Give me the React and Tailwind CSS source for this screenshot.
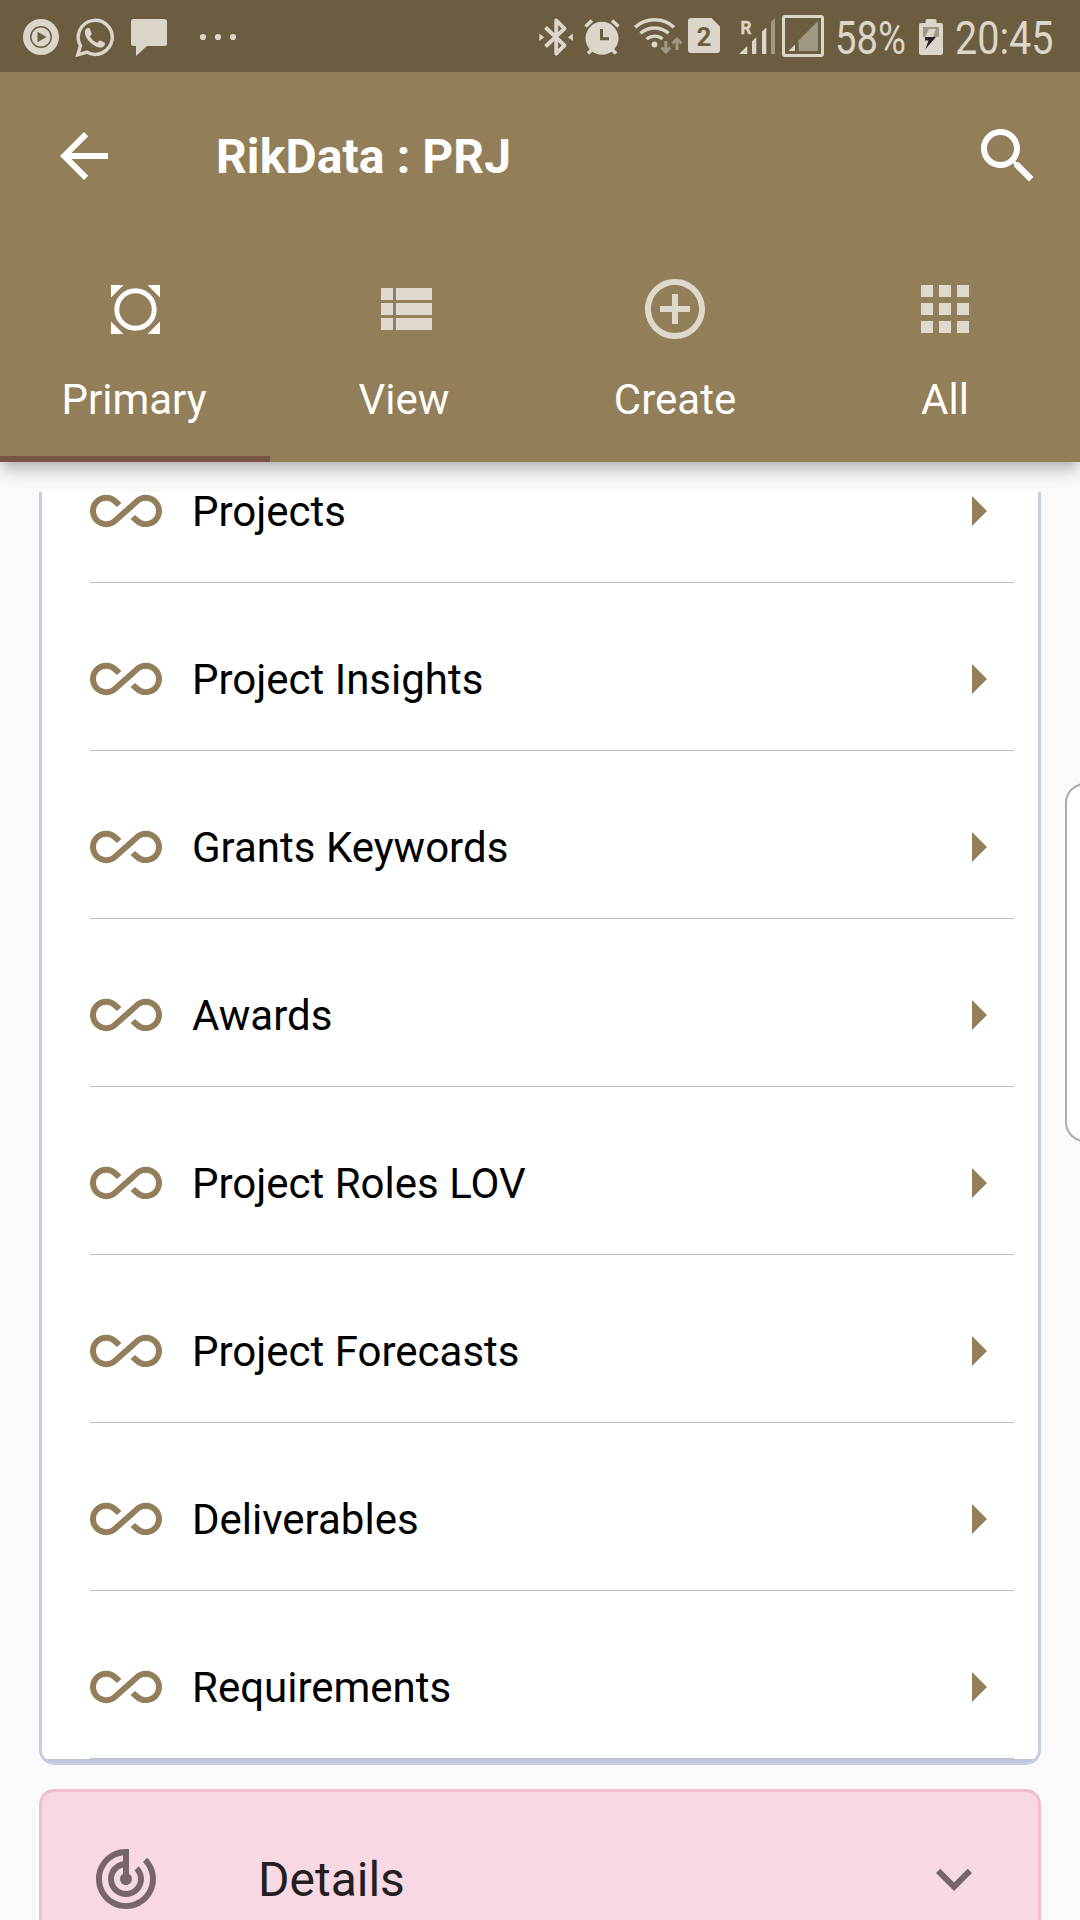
import React from "react";

const PATHS = {
  back: "M20 11H7.83l5.59-5.59L12 4l-8 8 8 8 1.41-1.41L7.83 13H20v-2z",
  search:
    "M15.5 14h-.79l-.28-.27C15.41 12.59 16 11.11 16 9.5 16 5.91 13.09 3 9.5 3S3 5.91 3 9.5 5.91 16 9.5 16c1.61 0 3.09-.59 4.23-1.57l.27.28v.79l5 4.99L20.49 19l-4.99-5zm-6 0C7.01 14 5 11.99 5 9.5S7.01 5 9.5 5 14 7.01 14 9.5 11.99 14 9.5 14z",
  view: "M4 14h4v-4H4v4zm0 5h4v-4H4v4zM4 9h4V5H4v4zm5 5h12v-4H9v4zm0 5h12v-4H9v4zM9 5v4h12V5H9z",
  create:
    "M13 7h-2v4H7v2h4v4h2v-4h4v-2h-4V7zm-1-5C6.48 2 2 6.48 2 12s4.48 10 10 10 10-4.48 10-10S17.52 2 12 2zm0 18c-4.41 0-8-3.59-8-8s3.59-8 8-8 8 3.59 8 8-3.59 8-8 8z",
  all: "M4 8h4V4H4v4zm6 12h4v-4h-4v4zm-6 0h4v-4H4v4zm0-6h4v-4H4v4zm6 0h4v-4h-4v4zm6-10v4h4V4h-4zm-6 4h4V4h-4v4zm6 6h4v-4h-4v4zm0 6h4v-4h-4v4z",
  infinity:
    "M18.6 6.62c-1.44 0-2.8.56-3.77 1.53L12 10.66 10.48 12h.01L7.8 14.39c-.64.64-1.49.99-2.4.99-1.87 0-3.39-1.51-3.39-3.38S3.53 8.62 5.4 8.62c.91 0 1.76.35 2.44 1.03l1.13 1 1.51-1.34L9.22 8.2C8.2 7.18 6.84 6.62 5.4 6.62 2.42 6.62 0 9.04 0 12s2.42 5.38 5.4 5.38c1.44 0 2.8-.56 3.77-1.53l2.83-2.5.01.01L13.52 12h-.01l2.69-2.39c.64-.64 1.49-.99 2.4-.99 1.87 0 3.39 1.51 3.39 3.38s-1.52 3.38-3.39 3.38c-.9 0-1.76-.35-2.44-1.03l-1.14-1.01-1.51 1.34 1.27 1.12c1.02 1.01 2.37 1.57 3.82 1.57 2.98 0 5.4-2.41 5.4-5.38s-2.42-5.37-5.4-5.37z",
  right: "M10 17l5-5-5-5v10z",
  track:
    "M19.07 4.93l-1.41 1.41C19.1 7.79 20 9.79 20 12c0 4.42-3.58 8-8 8s-8-3.58-8-8c0-4.08 3.05-7.44 7-7.93v2.02C8.16 6.57 6 9.03 6 12c0 3.31 2.69 6 6 6s6-2.69 6-6c0-1.66-.67-3.16-1.76-4.24l-1.41 1.41C15.55 9.9 16 10.9 16 12c0 2.21-1.79 4-4 4s-4-1.79-4-4c0-1.86 1.28-3.41 3-3.86v2.14c-.6.35-1 .98-1 1.72 0 1.1.9 2 2 2s2-.9 2-2c0-.74-.4-1.38-1-1.72V2h-1C6.48 2 2 6.48 2 12s4.48 10 10 10 10-4.48 10-10c0-2.76-1.12-5.26-2.93-7.07z",
  down: "M16.59 8.59L12 13.17 7.41 8.59 6 10l6 6 6-6z",
};

function Icon({ name, className = "" }) {
  return (
    <svg viewBox="0 0 24 24" fill="currentColor" className={"h-[72px] w-[72px] shrink-0 " + className}>
      <path d={PATHS[name]} />
    </svg>
  );
}

function PrimaryIcon() {
  return (
    <svg viewBox="0 0 72 72" fill="currentColor" className="h-[72px] w-[72px]">
      <path d="M12 12h12.500L12 24.500zM61 12v12.500L48.500 12zM12 61V48.500L24.500 61zM61 61H48.500L61 48.500z" />
      <circle cx="36.500" cy="36.500" r="18.700" fill="none" stroke="currentColor" strokeWidth="4.900" />
    </svg>
  );
}

function StatusBar() {
  return (
    <div className="flex h-[72px] items-center bg-[#6c5d40] pl-[23px] text-[#dbd5ca]">
      <svg viewBox="23 0 36 72" className="h-[72px] w-[36px]" fill="currentColor">
        <circle cx="41" cy="37" r="18" />
        <circle cx="41" cy="37" r="10.2" fill="none" stroke="#6c5d40" strokeWidth="1.5" />
        <path d="M37.5 31.7v10.6L46.5 37z" fill="#6c5d40" />
      </svg>
      <svg viewBox="75 0 40 72" className="ml-[16px] h-[72px] w-[40px]" fill="currentColor">
        <path
          d="M77.8 54.8l2.7-9A17 17 0 1 1 87 52.2z"
          fill="none"
          stroke="currentColor"
          strokeWidth="3.4"
          strokeLinejoin="miter"
        />
        <path d="M86.3 28.6c1.5-1 3.2-1 3.8.6l1.6 4.2c.3 1.2-1.6 2.6-1.8 3.2 1.6 3 4.200 5.200 7.200 6.200 1 0 2-2.600 3.200-2.200l4.400 2.200c1 .8-.2 3.400-1.800 4.200-3 1.600-7.400-.2-11.200-3.200-3.400-2.800-6.800-7.200-6.800-11.200 0-1.600.6-3.200 1.400-4z" />
      </svg>
      <svg viewBox="131 0 36 72" className="ml-[16px] h-[72px] w-[36px]" fill="currentColor">
        <path d="M133.500 19h31q2.500 0 2.500 2.500v22q0 2.500-2.500 2.500H147l-11 10V46h-2.500q-2.500 0-2.500-2.500v-22q0-2.500 2.500-2.500z" />
      </svg>
      <svg viewBox="199 0 38 72" className="ml-[32px] h-[72px] w-[38px]" fill="currentColor">
        <circle cx="203" cy="37" r="3.100" />
        <circle cx="218" cy="37" r="3.100" />
        <circle cx="233" cy="37" r="3.100" />
      </svg>

      <svg viewBox="538 0 36 72" className="ml-[301px] h-[72px] w-[36px]" fill="currentColor">
        <path
          d="M545.500 27.500l19 17.800-8.300 8.300V20.400l8.300 8.300-19 17.800"
          fill="none"
          stroke="currentColor"
          strokeWidth="3.900"
          strokeLinejoin="round"
        />
        <path d="M539.300 33.500v7.500l5-3.800zM572.900 33.500v7.500l-5-3.800z" />
      </svg>
      <svg viewBox="583 0 38 72" className="ml-[9px] h-[72px] w-[38px]" fill="currentColor">
        <circle cx="602" cy="38.300" r="16.500" />
        <path
          d="M585.500 26.500l6.500-6M618.500 26.500l-6.500-6M588 53.500l4-4M616 53.500l-4-4"
          stroke="currentColor"
          strokeWidth="3.600"
        />
        <path d="M601.500 29v9.700h7.500" fill="none" stroke="#6c5d40" strokeWidth="3" />
      </svg>
      <svg viewBox="633 0 50 72" className="ml-[12px] h-[72px] w-[50px]" fill="none">
        <g stroke="currentColor" strokeWidth="3.400">
          <path d="M635 27.200c11-10 28.500-10 39 0" />
          <path d="M640.500 33.200c8-7 20-7 28 0" />
          <path d="M646.500 39c5-3.800 11.500-3.800 16 0" />
        </g>
        <circle cx="654.500" cy="44.500" r="2.900" fill="currentColor" />
        <path d="M665.800 41v11M661.500 47.500l4.300 4.500 4.300-4.500M677 50V39.500M672.500 43.500l4.500-4.500 4.500 4.500" stroke="#a09783" strokeWidth="3" />
      </svg>
      <svg viewBox="688 0 32 72" className="ml-[5px] h-[72px] w-[32px]">
        <path d="M691 18h20.500l8.500 8.500V50q0 3-3 3h-26q-3 0-3-3V21q0-3 3-3z" fill="currentColor" />
        <text x="704" y="45.800" textAnchor="middle" fill="#6c5d40" className="font-[Roboto] text-[26px] font-bold">
          2
        </text>
      </svg>
      <svg viewBox="739 0 37 72" className="ml-[19px] h-[72px] w-[37px]" fill="currentColor">
        <text
          x="740.500"
          y="34"
          textLength="11"
          lengthAdjust="spacingAndGlyphs"
          stroke="currentColor"
          strokeWidth="0.400"
          className="font-[Roboto] text-[18px] font-bold"
        >
          R
        </text>
        <path d="M739 54l8.300-8v8zM752 41.300l4.300-4V54H752zM762 31.500l4.300-4V54H762z" />
        <path d="M771 22l4-4v36h-4z" fill="#a09783" />
      </svg>
      <svg viewBox="782 0 42 72" className="ml-[6px] h-[72px] w-[42px]" fill="currentColor">
        <rect x="783.500" y="16.500" width="39" height="39" rx="1.500" fill="none" stroke="currentColor" strokeWidth="3" />
        <path d="M788.500 51l6.500-6.500V51z" />
        <path d="M798.500 51V40.500L818 21v30z" fill="#a09783" />
      </svg>
      <div className="ml-[11px] w-[84px]">
        <span className="inline-block origin-left scale-x-[0.83] text-[46px] leading-[72px]">
          <span className="relative top-[2px]">58%</span>
        </span>
      </div>
      <svg viewBox="919 0 24 72" className="h-[72px] w-[24px]">
        <path d="M921 23h4.500v-2.500q0-1.500 1.500-1.500h8q1.500 0 1.500 1.500V23h4.500q2 0 2 2v28q0 2-2 2h-20q-2 0-2-2V25q0-2 2-2z" fill="currentColor" />
        <path d="M923 27h16v10h-16z" fill="#a09783" />
        <path d="M929 29h7l-3 8h-8z" fill="currentColor" />
        <path d="M925 37h11l-10.500 12 3-8.500h-3.500z" fill="#2a2222" />
      </svg>
      <div className="ml-[12px]">
        <span className="inline-block origin-left scale-x-[0.86] text-[46px] leading-[72px]">
          <span className="relative top-[2px]">20:45</span>
        </span>
      </div>
    </div>
  );
}

const TABS = [
  { label: "Primary", icon: null },
  { label: "View", icon: "view" },
  { label: "Create", icon: "create" },
  { label: "All", icon: "all" },
];

const ITEMS = [
  "Projects",
  "Project Insights",
  "Grants Keywords",
  "Awards",
  "Project Roles LOV",
  "Project Forecasts",
  "Deliverables",
  "Requirements",
];

export default function App() {
  return (
    <div className="relative flex h-[1920px] w-[1080px] flex-col overflow-hidden bg-[#fafafa] font-[Roboto,sans-serif]">
      <header className="relative z-10 h-[462px] shrink-0 bg-[#927e58] text-white shadow-[0_6px_12px_-3px_rgba(0,0,0,0.2),0_12px_15px_0_rgba(0,0,0,0.1),0_3px_30px_0_rgba(0,0,0,0.06)]">
        <StatusBar />
        <div className="flex h-[168px] items-center pr-[36px] pl-[48px]">
          <Icon name="back" />
          <h1 className="ml-[96px] flex-1 pt-[2px] text-[48px] leading-[72px] font-bold tracking-[0.1px]">RikData : PRJ</h1>
          <Icon name="search" />
        </div>
        <nav className="grid h-[222px] grid-cols-4">
          {TABS.map((tab, i) => (
            <div
              key={tab.label}
              className={
                "flex flex-col items-center border-b-[6px] pt-[33px] " +
                (i === 0 ? "border-[#795548]" : "border-transparent")
              }
            >
              {tab.icon ? <Icon name={tab.icon} className="text-[#dfd8cc]" /> : <PrimaryIcon />}
              <span className={"mt-[30px] text-[42px] leading-[49px] " + (i < 2 ? "pr-[2px]" : "")}>{tab.label}</span>
            </div>
          ))}
        </nav>
      </header>

      <main className="flex flex-1 flex-col gap-[24px] px-[39px] pt-[30px]">
        <section className="h-[1273px] shrink-0 overflow-hidden rounded-b-[15px] border-x-[3px] border-b-[3px] border-[#c7cce3] bg-[#c0c4d7]">
          <ul className="-mt-[77px] bg-white">
            {ITEMS.map((item) => (
              <li key={item} className="h-[168px] pr-[24px] pl-[48px]">
                <div className="flex h-full items-center border-b border-[#b9c1c7] pt-[25px] text-[#927e58]">
                  <Icon name="infinity" />
                  <span className="ml-[30px] flex-1 pt-[2px] text-[42px] leading-[48px] text-black">{item}</span>
                  <Icon name="right" />
                </div>
              </li>
            ))}
          </ul>
        </section>

        <section className="flex h-[180px] shrink-0 items-center rounded-[15px] border-[3px] border-[#f1bfd0] bg-[#f8d9e3] pr-[48px] pl-[48px] text-[#76666b]">
          <Icon name="track" />
          <span className="ml-[96px] flex-1 pt-[2px] text-[48px] leading-[56px] text-[#231e20]">Details</span>
          <Icon name="down" />
        </section>
      </main>

      {/* Edge panel handle */}
      <div className="absolute top-[783px] left-[1065px] h-[359px] w-[40px] rounded-[20px] border-2 border-[#acacac] bg-white" />
    </div>
  );
}
